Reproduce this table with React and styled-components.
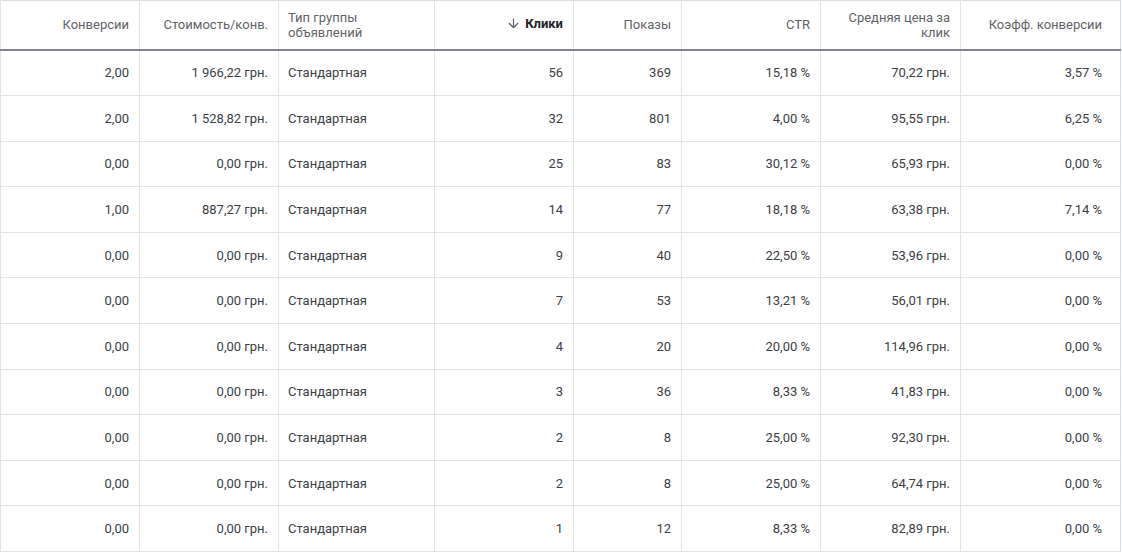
import React from "react";
import styled, { createGlobalStyle } from "styled-components";

const GlobalStyle = createGlobalStyle`
  body {
    margin: 0;
    background: #fff;
    font-family: Roboto, "Liberation Sans", Arial, sans-serif;
  }
`;

const columns = [
  { key: "conv", label: "Конверсии", width: 139 },
  { key: "cost", label: "Стоимость/конв.", width: 139 },
  { key: "type", label: "Тип группы объявлений", width: 156, left: true },
  { key: "clicks", label: "Клики", width: 139, sorted: true },
  { key: "impr", label: "Показы", width: 108 },
  { key: "ctr", label: "CTR", width: 139 },
  { key: "cpc", label: "Средняя цена за клик", width: 140 },
  { key: "rate", label: "Коэфф. конверсии", width: 160, last: true },
];

const rows = [
  ["2,00", "1 966,22 грн.", "Стандартная", "56", "369", "15,18 %", "70,22 грн.", "3,57 %"],
  ["2,00", "1 528,82 грн.", "Стандартная", "32", "801", "4,00 %", "95,55 грн.", "6,25 %"],
  ["0,00", "0,00 грн.", "Стандартная", "25", "83", "30,12 %", "65,93 грн.", "0,00 %"],
  ["1,00", "887,27 грн.", "Стандартная", "14", "77", "18,18 %", "63,38 грн.", "7,14 %"],
  ["0,00", "0,00 грн.", "Стандартная", "9", "40", "22,50 %", "53,96 грн.", "0,00 %"],
  ["0,00", "0,00 грн.", "Стандартная", "7", "53", "13,21 %", "56,01 грн.", "0,00 %"],
  ["0,00", "0,00 грн.", "Стандартная", "4", "20", "20,00 %", "114,96 грн.", "0,00 %"],
  ["0,00", "0,00 грн.", "Стандартная", "3", "36", "8,33 %", "41,83 грн.", "0,00 %"],
  ["0,00", "0,00 грн.", "Стандартная", "2", "8", "25,00 %", "92,30 грн.", "0,00 %"],
  ["0,00", "0,00 грн.", "Стандартная", "2", "8", "25,00 %", "64,74 грн.", "0,00 %"],
  ["0,00", "0,00 грн.", "Стандартная", "1", "12", "8,33 %", "82,89 грн.", "0,00 %"],
];

const ArrowDown = () => (
  <svg width="15" height="15" viewBox="0 0 24 24" fill="#5f6368">
    <path d="M20 12l-1.41-1.41L13 16.17V4h-2v12.17l-5.58-5.59L4 12l8 8 8-8z" />
  </svg>
);

const App = () => {
  return (
    <>
      <GlobalStyle />
      <Table>
        <colgroup>
          {columns.map((col) => (
            <col key={col.key} style={{ width: col.width }} />
          ))}
        </colgroup>
        <thead>
          <tr>
            {columns.map((col) => (
              <HeadCell key={col.key} $left={col.left} $last={col.last} $sorted={col.sorted}>
                {col.sorted ? (
                  <SortLabel>
                    <ArrowDown />
                    {col.label}
                  </SortLabel>
                ) : (
                  col.label
                )}
              </HeadCell>
            ))}
          </tr>
        </thead>
        <tbody>
          {rows.map((row, idx) => (
            <Row key={idx}>
              {row.map((value, i) => (
                <Cell key={i} $left={columns[i].left} $last={columns[i].last}>
                  {value}
                </Cell>
              ))}
            </Row>
          ))}
        </tbody>
      </Table>
    </>
  );
};

const Table = styled.table`
  width: 1120px;
  table-layout: fixed;
  border-collapse: collapse;
  border: 1px solid #dadce0;
  font-size: 13px;
  color: #3c4043;
`;

const HeadCell = styled.th`
  height: 49px;
  padding: 0 ${(p) => (p.$last ? "18px" : "10px")} 0 ${(p) => (p.$left ? "9px" : "10px")};
  text-align: ${(p) => (p.$left ? "left" : "right")};
  vertical-align: middle;
  font-weight: ${(p) => (p.$sorted ? 700 : 400)};
  color: ${(p) => (p.$sorted ? "#202124" : "#5f6368")};
  border-left: 1px solid #e3e4e6;
  border-bottom: 2px solid #80868b;
  line-height: 15px;
  box-sizing: border-box;
`;

const SortLabel = styled.span`
  display: inline-flex;
  align-items: center;
  gap: 4px;
`;

const Row = styled.tr`
  border-bottom: 1px solid #e3e4e6;
`;

const Cell = styled.td`
  height: 44.6px;
  padding: 0 ${(p) => (p.$last ? "18px" : "10px")} 0 ${(p) => (p.$left ? "9px" : "10px")};
  text-align: ${(p) => (p.$left ? "left" : "right")};
  vertical-align: middle;
  border-left: 1px solid #e3e4e6;
  white-space: nowrap;
`;

export default App;
